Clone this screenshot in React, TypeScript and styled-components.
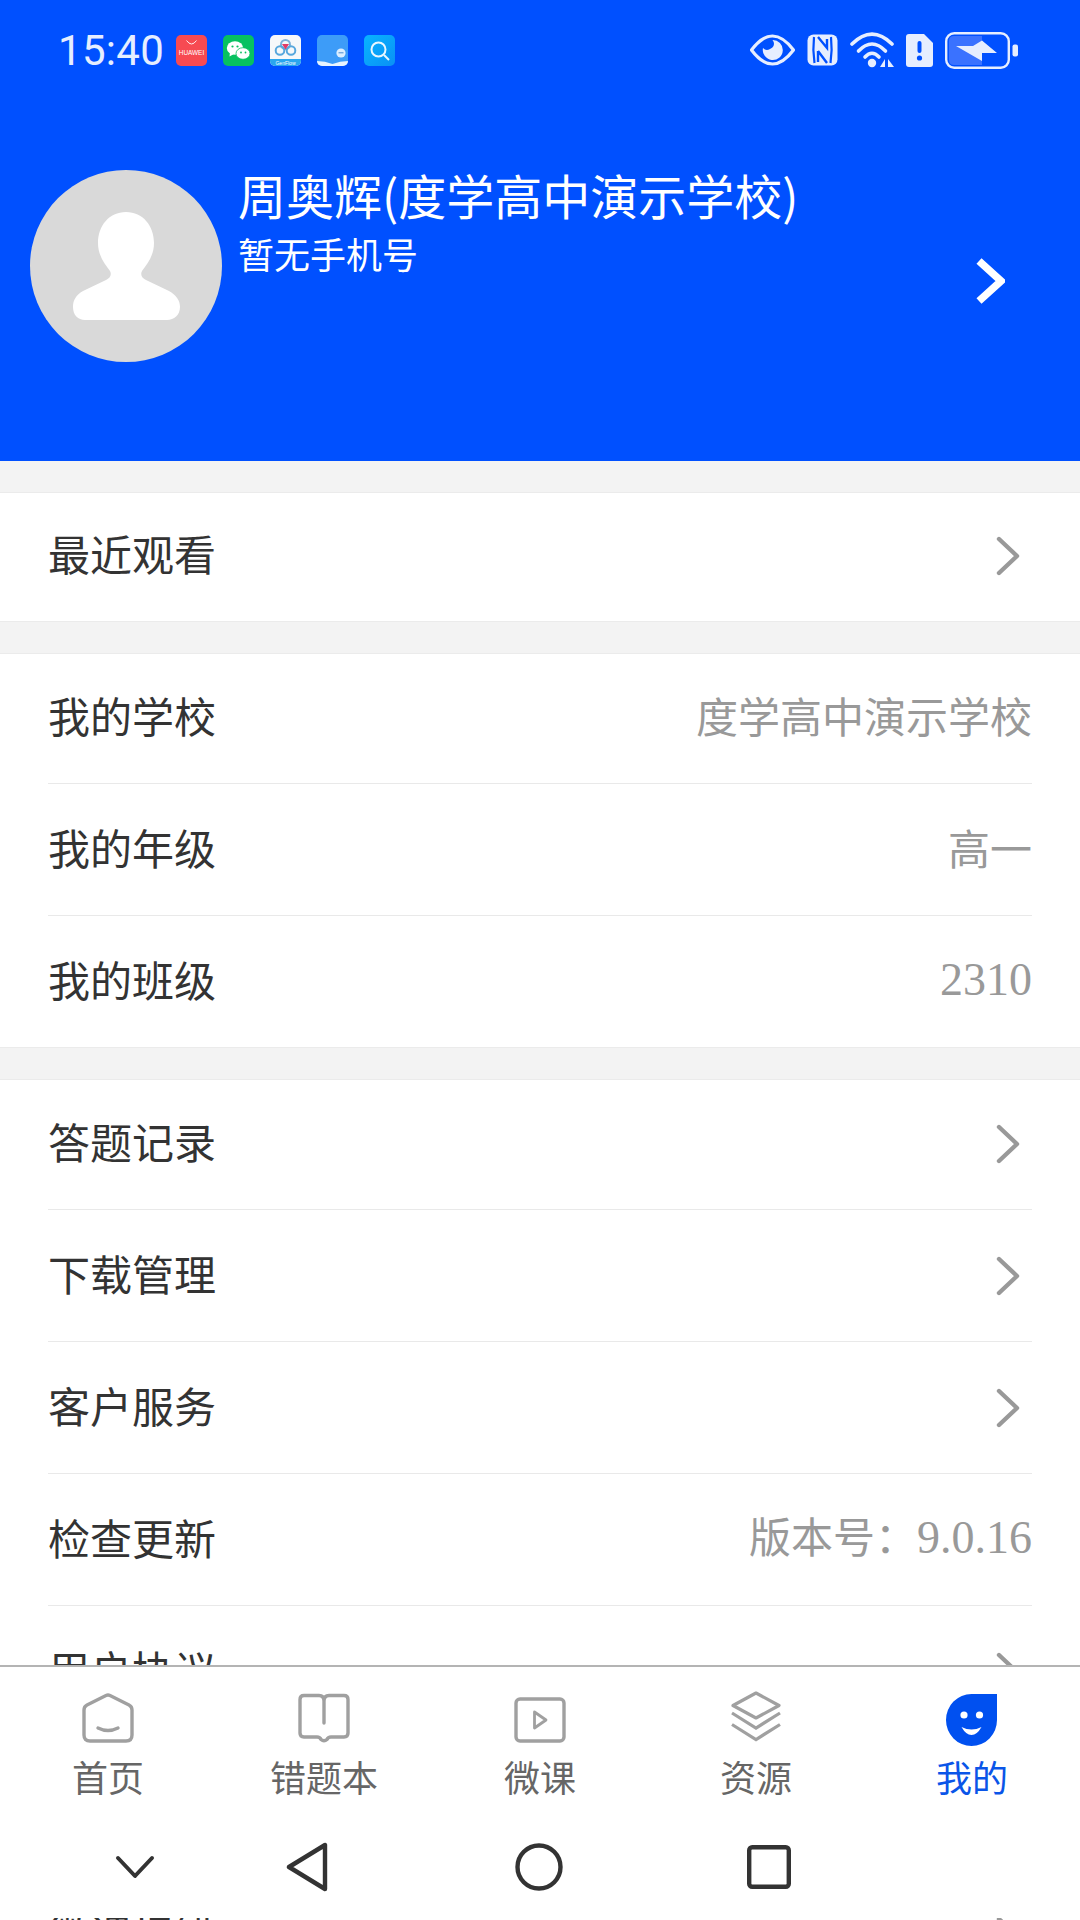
import React from "react";
import styled, { createGlobalStyle } from "styled-components";

const Global = createGlobalStyle`
  html, body { margin: 0; padding: 0; background: #fff; }
  body { font-family: "Noto Sans CJK SC", "Noto Sans", sans-serif; }
  * { box-sizing: border-box; }
`;

const Page = styled.div`
  position: relative;
  width: 1080px;
  height: 1920px;
  overflow: hidden;
  background: #f3f3f3;
`;

const Header = styled.header`
  height: 461px;
  background: #0050ff;
  color: #fff;
`;

const StatusBar = styled.div`
  display: flex;
  align-items: center;
  height: 100px;
  padding: 0 62px 0 58px;
  color: #e6eeff;
`;

const Time = styled.span`
  font-family: Roboto, sans-serif;
  font-size: 42px;
  line-height: 50px;
  width: 118px;
  letter-spacing: 0.3px;
  margin-top: 2px;
`;

const AppIcons = styled.div`
  display: flex;
  gap: 16px;
  flex: 1;
`;

const SystemIcons = styled.div`
  display: flex;
  align-items: center;
  gap: 12px;
`;

const Profile = styled.div`
  display: flex;
  align-items: flex-start;
  padding: 70px 75px 0 30px;
`;

const Avatar = styled.div`
  width: 192px;
  height: 192px;
  border-radius: 50%;
  background: #d9d9d9;
  flex: none;
`;

const Who = styled.div`
  flex: 1;
  padding-left: 16px;
`;

const Name = styled.div`
  font-size: 48px;
  line-height: 60px;
  margin-top: -6px;
`;

const Phone = styled.div`
  font-size: 36px;
  line-height: 50px;
  margin-top: 4px;
`;

const ProfileArrow = styled.div`
  padding-top: 87px;
  line-height: 0;
`;

const Section = styled.section`
  margin-top: 31px;
  background: #fff;
  border-top: 1px solid #ebebeb;
  border-bottom: 1px solid #ebebeb;
`;

const Row = styled.div`
  height: 132px;
  margin: 0 48px;
  display: flex;
  align-items: center;
  justify-content: space-between;
  border-bottom: 1px solid #e9e9e9;
  &:first-child { margin-top: -2px; }
  &:last-child { border-bottom: none; height: 131px; }
`;

const SingleRow = styled(Row)`
  &:first-child { margin-top: -3px; }
`;

const Label = styled.span`
  font-size: 42px;
  line-height: 56px;
  color: #333;
  margin-bottom: 6px;
`;

const Value = styled.span`
  font-size: 42px;
  line-height: 56px;
  color: #999;
  margin-bottom: 6px;
`;

const Digits = styled.span`
  font-family: "Liberation Serif", serif;
  font-size: 46px;
`;

const RowArrow = styled.svg`
  display: block;
  margin-right: 12px;
`;

const Nav = styled.nav`
  position: absolute;
  left: 0;
  right: 0;
  bottom: 2px;
  height: 253px;
  background: #fff;
  border-top: 2px solid #b4b4b4;
`;

const Tabs = styled.div`
  display: grid;
  grid-template-columns: repeat(5, 216px);
  padding-top: 24px;
`;

const Tab = styled.div<{ $active?: boolean }>`
  display: flex;
  flex-direction: column;
  align-items: center;
  color: ${(p) => (p.$active ? "#0a55e8" : "#666")};
  font-size: 36px;
  line-height: 44px;
`;

const TabIcon = styled.svg`
  display: block;
  margin-bottom: 7px;
`;

const SysBar = styled.div`
  display: flex;
  align-items: center;
  height: 52px;
  margin-top: 43px;
  padding-left: 115px;
`;

const SysIcon = styled.svg<{ $gap: number }>`
  display: block;
  margin-left: ${(p) => p.$gap}px;
`;

const Chevron = () => (
  <RowArrow width="24" height="40" viewBox="0 0 24 40" fill="none">
    <path d="M3 3 L21 20 L3 37" stroke="#999" strokeWidth="4.4" strokeLinecap="round" strokeLinejoin="round" />
  </RowArrow>
);

const tile = { width: 31, height: 31, viewBox: "0 0 31 31" };

const Huawei = () => (
  <svg {...tile}>
    <rect width="31" height="31" rx="5" fill="#f74a52" />
    <path d="M10.5 5.5 Q15.5 12.5 20.5 5.5" fill="none" stroke="#fff" strokeWidth="0.9" />
    <text x="15.5" y="20" textAnchor="middle" fontSize="6.4" fontFamily="Liberation Sans, sans-serif" fill="#fff">HUAWEI</text>
  </svg>
);

const WeChat = () => (
  <svg {...tile}>
    <rect width="31" height="31" rx="5" fill="#07c160" />
    <ellipse cx="12" cy="13" rx="8.2" ry="6.8" fill="#fff" />
    <path d="M7 17 L6.5 21.5 L11 19 Z" fill="#fff" />
    <ellipse cx="20" cy="18.5" rx="7" ry="5.8" fill="#fff" stroke="#07c160" strokeWidth="0.8" />
    <circle cx="9.5" cy="11.5" r="1.1" fill="#07c160" />
    <circle cx="14.5" cy="11.5" r="1.1" fill="#07c160" />
    <circle cx="18" cy="17.5" r="0.9" fill="#07c160" />
    <circle cx="22.5" cy="17.5" r="0.9" fill="#07c160" />
  </svg>
);

const GenFlow = () => (
  <svg {...tile}>
    <defs>
      <clipPath id="gf"><rect width="31" height="31" rx="5" /></clipPath>
    </defs>
    <g clipPath="url(#gf)">
      <rect width="31" height="31" fill="#f6f8fa" />
      <rect y="24" width="31" height="7" fill="#2aa6ee" />
      <circle cx="15.5" cy="9.5" r="4.5" fill="none" stroke="#7fb0d8" strokeWidth="2" />
      <circle cx="10" cy="15.5" r="4.3" fill="none" stroke="#57a7dd" strokeWidth="2" />
      <circle cx="21" cy="15.5" r="4.3" fill="none" stroke="#57a7dd" strokeWidth="2" />
      <path d="M12 9 H19 L15.5 14.5 Z" fill="#e23a66" />
      <text x="15.5" y="29.5" textAnchor="middle" fontSize="5" fontFamily="Liberation Sans, sans-serif" fill="#fff">GenFlow</text>
    </g>
  </svg>
);

const Book = () => (
  <svg {...tile}>
    <defs>
      <clipPath id="bk"><rect width="31" height="31" rx="5" /></clipPath>
    </defs>
    <g clipPath="url(#bk)">
      <rect width="31" height="31" fill="#3d9cf8" />
      <circle cx="24" cy="18" r="4.6" fill="#dceeff" />
      <rect x="21.5" y="17.3" width="5" height="1" fill="#4c8fd0" />
      <path d="M0 26 Q8 26 15.5 29 Q23 26 31 26 V31 H0 Z" fill="#e8f4ff" />
    </g>
  </svg>
);

const Search = () => (
  <svg {...tile}>
    <defs>
      <linearGradient id="sr" x1="0" y1="0" x2="1" y2="1">
        <stop offset="0" stopColor="#08b4ff" />
        <stop offset="1" stopColor="#0a90f5" />
      </linearGradient>
    </defs>
    <rect width="31" height="31" rx="5" fill="url(#sr)" />
    <circle cx="14.5" cy="14.5" r="7" fill="none" stroke="#e8f6ff" strokeWidth="2" />
    <path d="M20 20 L25 25" stroke="#e8f6ff" strokeWidth="2" />
  </svg>
);

const ink = "#e6eeff";

const Eye = () => (
  <svg width="45" height="32" viewBox="0 0 45 32" fill="none">
    <path d="M1.5 16 Q22.5 -12 43.5 16 Q22.5 44 1.5 16 Z" stroke={ink} strokeWidth="3.2" strokeLinejoin="round" />
    <path d="M22.5 6 A10 10 0 1 1 13 14 A5.5 5.5 0 0 0 20 15 A5.5 5.5 0 0 0 22.5 6 Z" fill={ink} />
  </svg>
);

const Nfc = () => (
  <svg width="31" height="32" viewBox="0 0 31 32" fill="none">
    <rect x="0.5" y="0.5" width="30" height="31" rx="6" fill={ink} />
    <path d="M7 3 Q5.5 16 7.5 29" stroke="#0050ff" strokeWidth="2.2" />
    <path d="M24 3 Q25.5 16 23.5 29" stroke="#0050ff" strokeWidth="2.2" />
    <path d="M11 3 L20 14 V5 M11 17 V28 M11 17 L20 29" stroke="#0050ff" strokeWidth="2.4" fill="none" />
  </svg>
);

const Wifi = () => (
  <svg width="44" height="36" viewBox="0 0 44 36" fill="none">
    <path d="M2 12 Q22 -8 42 12" stroke={ink} strokeWidth="3.6" strokeLinecap="round" />
    <path d="M8.5 19 Q22 5 35.5 19" stroke={ink} strokeWidth="3.6" strokeLinecap="round" />
    <path d="M15 25 Q22 17.5 29 25" stroke={ink} strokeWidth="3.6" strokeLinecap="round" />
    <circle cx="22" cy="31" r="4.2" fill={ink} />
    <path d="M35 27 V35 L30 35 Z M38 27 V35 L44 35 Z" fill={ink} />
  </svg>
);

const SimAlert = () => (
  <svg width="27" height="33" viewBox="0 0 27 33">
    <path d="M3 0 H18 L27 9 V30 Q27 33 24 33 H3 Q0 33 0 30 V3 Q0 0 3 0 Z" fill={ink} />
    <rect x="11.5" y="7" width="4" height="12" rx="2" fill="#0050ff" />
    <circle cx="13.5" cy="24" r="2.6" fill="#0050ff" />
  </svg>
);

const Battery = () => (
  <svg width="73" height="37" viewBox="0 0 73 37" fill="none">
    <path d="M9 4 H37 V33 H9 Q4 33 4 28 V9 Q4 4 9 4 Z" fill="#3a72ff" />
    <rect x="1.2" y="1.2" width="62.6" height="34.6" rx="8" stroke={ink} strokeWidth="2.4" />
    <path d="M11 14 H28 L37 8.5 L52 21 H37 V29 Z" fill={ink} />
    <rect x="67.5" y="12.5" width="5.5" height="12" rx="2" fill={ink} />
  </svg>
);

const grey = "#a0a0a0";

const TabIconFrame = ({ children }: { children: React.ReactNode }) => (
  <TabIcon width="60" height="56" viewBox="0 0 60 56" fill="none">{children}</TabIcon>
);

const HomeGlyph = () => (
  <TabIconFrame>
    <path d="M28 4.5 Q30 3.5 32 4.5 L51 14 Q54 15.5 54 19 V44 Q54 50 48 50 H12 Q6 50 6 44 V19 Q6 15.5 9 14 Z" stroke={grey} strokeWidth="3.4" strokeLinejoin="round" />
    <path d="M20 37 Q30 42 40 37" stroke={grey} strokeWidth="3.4" strokeLinecap="round" />
  </TabIconFrame>
);

const BookGlyph = () => (
  <TabIconFrame>
    <path d="M30 10 Q30 4.5 25 4.5 H10 Q6 4.5 6 8.5 V42 Q6 46 10 46 H23 Q26 46 27 48.5 Q30 51 33 48.5 Q34 46 37 46 H50 Q54 46 54 42 V8.5 Q54 4.5 50 4.5 H35 Q30 4.5 30 10 V32" stroke={grey} strokeWidth="3.4" strokeLinejoin="round" strokeLinecap="round" />
  </TabIconFrame>
);

const PlayGlyph = () => (
  <TabIconFrame>
    <rect x="6" y="8" width="48" height="42" rx="4" stroke={grey} strokeWidth="3.4" />
    <path d="M24.5 21 L36 29 L24.5 37 Z" stroke={grey} strokeWidth="2.8" strokeLinejoin="round" />
  </TabIconFrame>
);

const LayersGlyph = () => (
  <TabIconFrame>
    <path d="M30 2 L53 14.5 L30 27 L7 14.5 Z" stroke={grey} strokeWidth="3.2" strokeLinejoin="round" />
    <path d="M6 22 L30 37 L54 22" stroke={grey} strokeWidth="3.2" />
    <path d="M6 33.5 L30 48.5 L54 33.5" stroke={grey} strokeWidth="3.2" />
  </TabIconFrame>
);

const MineGlyph = () => (
  <TabIconFrame>
    <path d="M55 3 V29 A25.5 26 0 1 1 29.5 3 Z" fill="#0050f0" />
    <circle cx="22" cy="24" r="3.6" fill="#fff" />
    <circle cx="37.5" cy="24" r="3.6" fill="#fff" />
    <path d="M19.5 36 Q29.5 41 39.5 36 Q35 44 29.5 44 Q24 44 19.5 36 Z" fill="#fff" />
  </TabIconFrame>
);

const tabs: { label: string; icon: React.ReactNode; active?: boolean }[] = [
  { label: "首页", icon: <HomeGlyph /> },
  { label: "错题本", icon: <BookGlyph /> },
  { label: "微课", icon: <PlayGlyph /> },
  { label: "资源", icon: <LayersGlyph /> },
  { label: "我的", icon: <MineGlyph />, active: true },
];

export default function App() {
  return (
    <Page>
      <Global />
      <Header>
        <StatusBar>
          <Time>15:40</Time>
          <AppIcons>
            <Huawei />
            <WeChat />
            <GenFlow />
            <Book />
            <Search />
          </AppIcons>
          <SystemIcons>
            <Eye />
            <Nfc />
            <Wifi />
            <SimAlert />
            <Battery />
          </SystemIcons>
        </StatusBar>
        <Profile>
          <Avatar>
            <svg width="192" height="192" viewBox="0 0 192 192">
              <path d="M96 42 C113 42 124 56 124 73 C124 85 118 93 112 101 C110 105 112 108 116 110 L139 121 C146 125 150 130 150 137 C150 145 144 150 137 150 L55 150 C48 150 43 145 43 137 C43 130 46 125 53 121 L76 110 C80 108 82 105 80 101 C74 93 68 85 68 73 C68 56 79 42 96 42 Z" fill="#fff" />
            </svg>
          </Avatar>
          <Who>
            <Name>周奥辉(度学高中演示学校)</Name>
            <Phone>暂无手机号</Phone>
          </Who>
          <ProfileArrow>
            <svg width="30" height="48" viewBox="0 0 30 48" fill="none">
              <path d="M4 4 L26 24 L4 44" stroke="#fff" strokeWidth="7.5" strokeLinejoin="miter" />
            </svg>
          </ProfileArrow>
        </Profile>
      </Header>

      <Section>
        <SingleRow>
          <Label>最近观看</Label>
          <Chevron />
        </SingleRow>
      </Section>

      <Section>
        <Row>
          <Label>我的学校</Label>
          <Value>度学高中演示学校</Value>
        </Row>
        <Row>
          <Label>我的年级</Label>
          <Value>高一</Value>
        </Row>
        <Row>
          <Label>我的班级</Label>
          <Value><Digits>2310</Digits></Value>
        </Row>
      </Section>

      <Section>
        <Row>
          <Label>答题记录</Label>
          <Chevron />
        </Row>
        <Row>
          <Label>下载管理</Label>
          <Chevron />
        </Row>
        <Row>
          <Label>客户服务</Label>
          <Chevron />
        </Row>
        <Row>
          <Label>检查更新</Label>
          <Value>版本号：<Digits>9.0.16</Digits></Value>
        </Row>
        <Row>
          <Label>用户协议</Label>
          <Chevron />
        </Row>
        <Row>
          <Label>隐私政策</Label>
          <Chevron />
        </Row>
        <Row>
          <Label>微课报错</Label>
          <Chevron />
        </Row>
      </Section>

      <Nav>
        <Tabs>
          {tabs.map((t) => (
            <Tab key={t.label} $active={t.active}>
              {t.icon}
              {t.label}
            </Tab>
          ))}
        </Tabs>
        <SysBar>
          <SysIcon $gap={0} width="40" height="26" viewBox="0 0 40 26" fill="none">
            <path d="M3 4 L20 22 L37 4" stroke="#333" strokeWidth="4" strokeLinecap="round" strokeLinejoin="round" />
          </SysIcon>
          <SysIcon $gap={131} width="42" height="50" viewBox="0 0 42 50" fill="none">
            <path d="M3 25 L39 3 V47 Z" stroke="#333" strokeWidth="4.4" strokeLinejoin="round" />
          </SysIcon>
          <SysIcon $gap={187} width="48" height="48" viewBox="0 0 48 48" fill="none">
            <circle cx="24" cy="24" r="21.5" stroke="#333" strokeWidth="4.4" />
          </SysIcon>
          <SysIcon $gap={184} width="44" height="44" viewBox="0 0 44 44" fill="none">
            <rect x="2.2" y="2.2" width="39.6" height="39.6" rx="3" stroke="#333" strokeWidth="4.4" />
          </SysIcon>
        </SysBar>
      </Nav>
    </Page>
  );
}
